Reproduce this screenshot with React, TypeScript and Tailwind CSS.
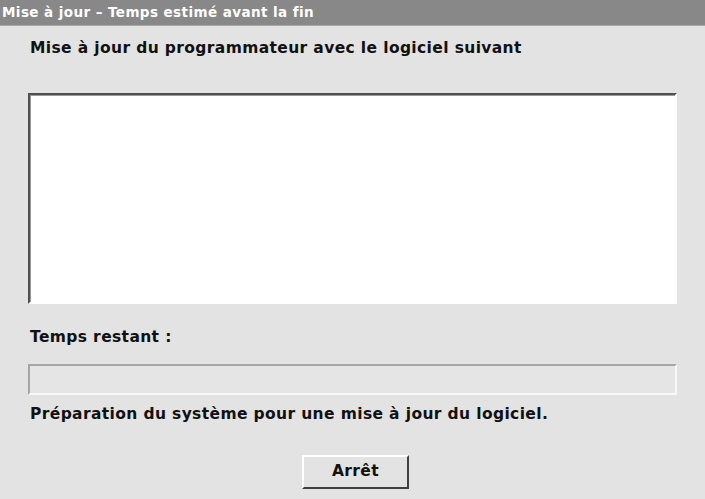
import React from "react";

export default function App() {
  const font = { fontFamily: '"DejaVu Sans", Verdana, sans-serif' };
  return (
    <div className="w-[705px] h-[499px] bg-[#e3e3e3] flex flex-col overflow-hidden" style={font}>
      <div className="h-[26px] bg-[#888888] border-b border-[#a8a8a8] flex items-center pl-[2px] text-white font-bold text-[13.5px] tracking-[0.42px]">
        Mise à jour – Temps estimé avant la fin
      </div>
      <div className="flex flex-col px-[28px]">
        <div className="mt-[13px] pl-[2px] h-[20px] flex items-center text-[15.5px] font-bold text-[#111] tracking-[0.37px]">
          Mise à jour du programmateur avec le logiciel suivant
        </div>
        <div className="mt-[34px] h-[211px] border-t-2 border-l-2 border-t-[#505050] border-l-[#505050] border-b-2 border-r-2 border-b-white border-r-white">
          <div className="w-full h-full bg-white border-t border-l border-[#9a9a9a] border-b-0 border-r-0"></div>
        </div>
        <div className="mt-[24px] pl-[2px] h-[20px] flex items-center text-[15.5px] font-bold text-[#111] tracking-[0.37px]">
          Temps restant :
        </div>
        <div className="mt-[16px] h-[31px] border-t-2 border-l-2 border-t-[#a6a6a6] border-l-[#a6a6a6] border-b-2 border-r-2 border-b-[#f8f8f8] border-r-[#f8f8f8] bg-[#e5e5e5]"></div>
        <div className="mt-[10px] pl-[2px] h-[20px] flex items-center text-[15.5px] font-bold text-[#111] tracking-[0.37px]">
          Préparation du système pour une mise à jour du logiciel.
        </div>
        <div className="mt-[30px] flex justify-center pl-[6px]">
          <div className="w-[107px] h-[34px] border-t-2 border-l-2 border-t-white border-l-white border-b-2 border-r-2 border-b-[#404040] border-r-[#404040] bg-[#e3e3e3] flex items-center justify-center text-[15.5px] font-bold text-[#111] tracking-[0.37px]">
            Arrêt
          </div>
        </div>
      </div>
    </div>
  );
}
